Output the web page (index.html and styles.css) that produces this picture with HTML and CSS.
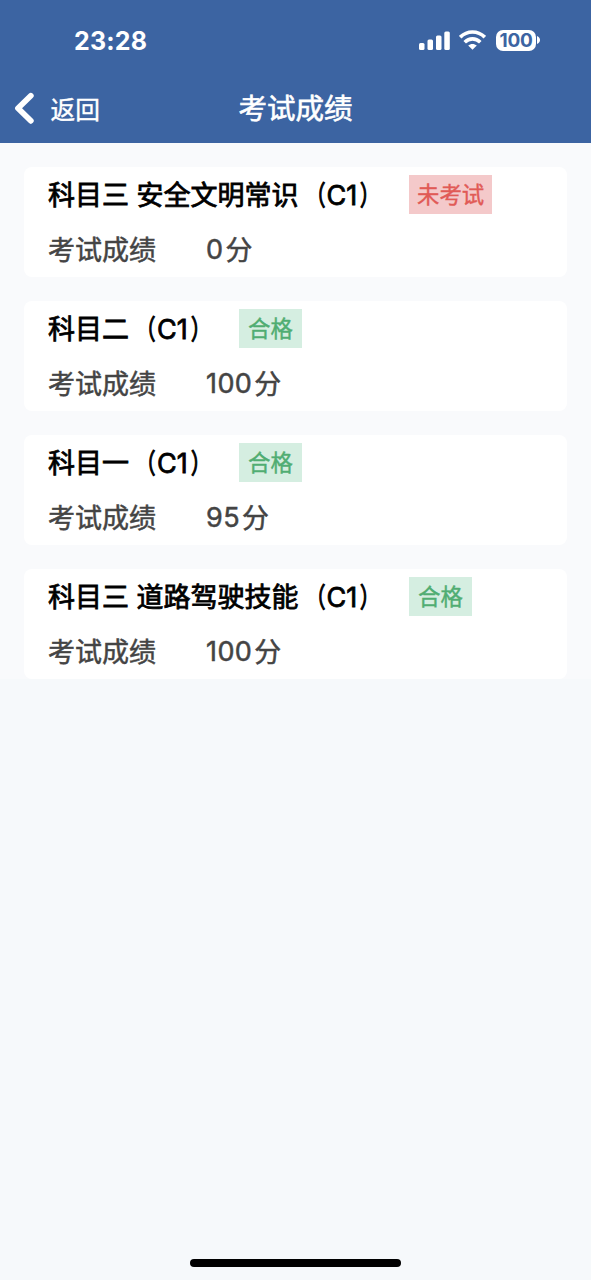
FILE: index.html
```html
<!DOCTYPE html>
<html lang="zh">
  <head>
    <meta charset="UTF-8" />
    <meta name="viewport" content="width=device-width, initial-scale=1.0" />
    <title>考试成绩</title>
    <link rel="stylesheet" href="styles.css">
  </head>
  <body>
    <div class="page">
      <header class="header">
        <div class="status">
          <span class="time">23:28</span>
          <div class="status-icons">
            <svg class="signal" width="31" height="19" viewBox="0 0 31 19" fill="#fff">
              <rect x="0" y="12" width="5.5" height="7" rx="1.5" />
              <rect x="8.5" y="8.5" width="5.5" height="10.5" rx="1.5" />
              <rect x="17" y="4.5" width="5.5" height="14.5" rx="1.5" />
              <rect x="25.3" y="0.5" width="5.5" height="18.5" rx="1.5" />
            </svg>
            <svg class="wifi" width="27" height="20" viewBox="0 0 27 20" fill="none" stroke="#fff" stroke-width="3.6">
              <path d="M1.2 7.2C8.2 0.3 18.8 0.3 25.8 7.2" />
              <path d="M5.7 12.2C10.2 7.8 16.8 7.8 21.3 12.2" />
              <path d="M13.5 19.7L9.2 15.6C11.6 13.3 15.4 13.3 17.8 15.6Z" fill="#fff" stroke="none" />
            </svg>
            <div class="battery">100</div>
            <svg class="battery-cap" width="3" height="8" viewBox="0 0 3 8" fill="#fff">
              <path d="M0 0C4 1.5 4 6.5 0 8Z" />
            </svg>
          </div>
        </div>
        <nav class="nav">
          <a class="back">
            <svg width="20" height="32" viewBox="0 0 20 32" fill="none" stroke="#fff" stroke-width="5.8" stroke-linecap="round" stroke-linejoin="round">
              <path d="M16.8 3.8L4 16.3L16.8 28.8" />
            </svg>
            <span>返回</span>
          </a>
          <h1>考试成绩</h1>
        </nav>
      </header>

      <main class="list">
        <div class="card">
          <div class="row">
            <h2>科目三 安全文明常识<span class="bracket open">（</span>C1<span class="bracket close">）</span></h2>
            <span class="tag tag-none">未考试</span>
          </div>
          <div class="row score">
            <span class="label">考试成绩</span>
            <span class="num">0</span><span class="unit">分</span>
          </div>
        </div>
        <div class="card">
          <div class="row">
            <h2>科目二<span class="bracket open">（</span>C1<span class="bracket close">）</span></h2>
            <span class="tag tag-pass">合格</span>
          </div>
          <div class="row score">
            <span class="label">考试成绩</span>
            <span class="num">100</span><span class="unit">分</span>
          </div>
        </div>
        <div class="card">
          <div class="row">
            <h2>科目一<span class="bracket open">（</span>C1<span class="bracket close">）</span></h2>
            <span class="tag tag-pass">合格</span>
          </div>
          <div class="row score">
            <span class="label">考试成绩</span>
            <span class="num">95</span><span class="unit">分</span>
          </div>
        </div>
        <div class="card">
          <div class="row">
            <h2>科目三 道路驾驶技能<span class="bracket open">（</span>C1<span class="bracket close">）</span></h2>
            <span class="tag tag-pass">合格</span>
          </div>
          <div class="row score">
            <span class="label">考试成绩</span>
            <span class="num">100</span><span class="unit">分</span>
          </div>
        </div>
      </main>

      <div class="home-bar"></div>
    </div>
  </body>
</html>
```

FILE: styles.css
```css
* {
  margin: 0;
  padding: 0;
  box-sizing: border-box;
}
body {
  font-family: Inter, "Noto Sans CJK TC", sans-serif;
  background: #fff;
}
.page {
  width: 591px;
  height: 1280px;
  display: flex;
  flex-direction: column;
  background: #f6f9fb;
}

.header {
  height: 143px;
  background: #3c64a2;
  color: #fff;
}
.status {
  height: 80px;
  padding: 0 51px 0 74px;
  display: flex;
  justify-content: space-between;
  align-items: center;
}
.time {
  padding-top: 1px;
  font-size: 25px;
  font-weight: 700;
  letter-spacing: 0.2px;
}
.status-icons {
  display: flex;
  align-items: center;
}
.wifi {
  margin: 0 10px 0 9px;
}
.battery {
  width: 40px;
  height: 21px;
  border-radius: 7px;
  background: #fff;
  color: #3c64a2;
  font-size: 19px;
  font-weight: 700;
  letter-spacing: -0.3px;
  line-height: 21px;
  text-align: center;
}
.battery-cap {
  margin-left: 1px;
}
.nav {
  height: 56px;
  padding: 0 14px;
  display: grid;
  grid-template-columns: 1fr auto 1fr;
  align-items: center;
}
.back {
  display: flex;
  align-items: center;
  gap: 16.5px;
  font-size: 24.7px;
  -webkit-text-stroke: 0.4px #fff;
}
h1 {
  padding-bottom: 3px;
  font-size: 28.5px;
  font-weight: 400;
  -webkit-text-stroke: 0.6px #fff;
}

.list {
  padding: 24px 24px 0;
  display: flex;
  flex-direction: column;
  gap: 24px;
  background: #f9fafc;
}
.card {
  height: 110px;
  padding: 0 24px;
  border-radius: 8px;
  background: #fff;
}
.row {
  height: 55px;
  display: flex;
  align-items: center;
}
h2 {
  width: 337px;
  margin-right: 24px;
  padding-bottom: 2px;
  font-size: 27px;
  font-weight: 400;
  white-space: nowrap;
  color: #000;
  -webkit-text-stroke: 0.8px #000;
}
.card:nth-child(2) h2,
.card:nth-child(3) h2 {
  width: 167px;
}
/* narrow brackets, kept close to the text inside */
.bracket {
  display: inline-block;
  width: 28px;
  font-family: "Noto Sans CJK SC", sans-serif;
  line-height: 1;
  -webkit-text-stroke: 1.3px #000;
}
.open {
  transform: translateX(-1px) scaleX(0.7);
  transform-origin: right;
}
.close {
  transform: translateX(3px) scaleX(0.7);
  transform-origin: left;
}
.tag {
  height: 39px;
  padding: 0 8px;
  font-size: 22.4px;
  line-height: 40px;
  -webkit-text-stroke: 0.4px currentColor;
}
.tag-none {
  background: #f4c9ca;
  color: #e15a56;
}
.tag-pass {
  padding: 0 9px;
  background: #d5eee1;
  color: #50ad72;
}
.score {
  font-size: 27px;
  color: #444;
  -webkit-text-stroke: 0.5px #444;
}
.label {
  width: 158px;
}
.label,
.unit {
  padding-bottom: 2px;
}
.num {
  margin-right: 2px;
  letter-spacing: 0.4px;
}

.home-bar {
  width: 211px;
  height: 8px;
  margin: auto auto 13px 190px;
  border-radius: 4px;
  background: #000;
}
```
